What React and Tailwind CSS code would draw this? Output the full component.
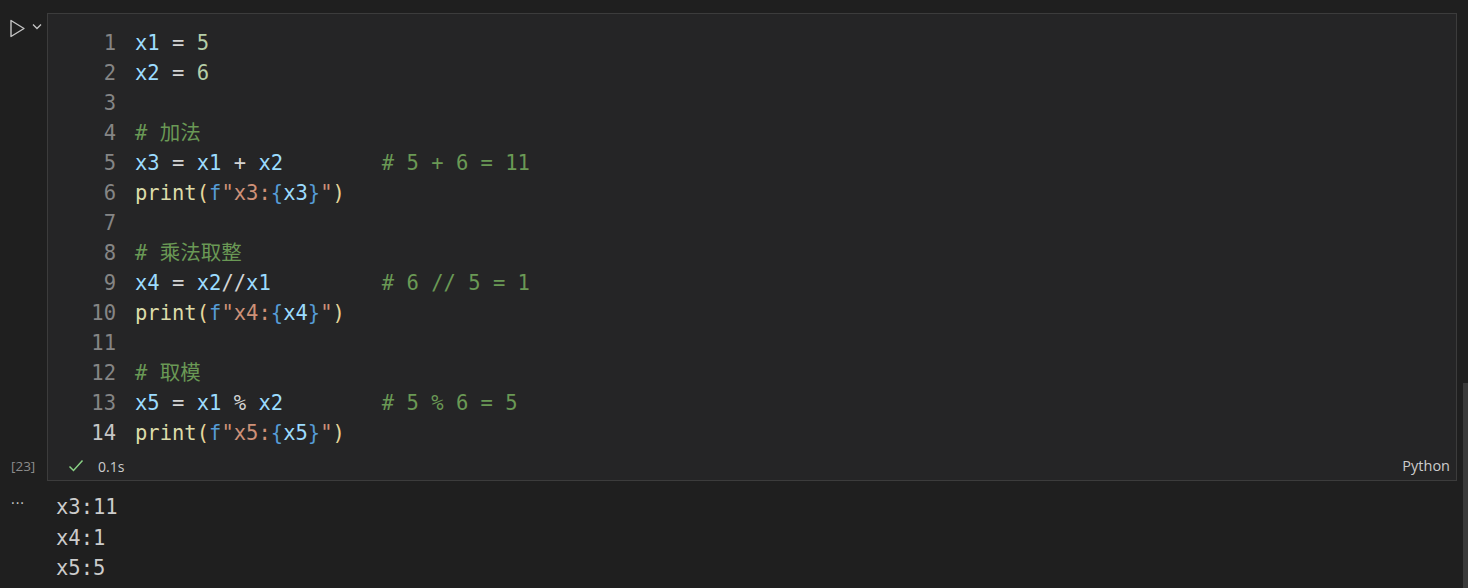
const C = {
  v: "text-[#9cdcfe]",
  n: "text-[#b5cea8]",
  o: "text-[#d4d4d4]",
  c: "text-[#6a9955]",
  f: "text-[#dcdcaa]",
  s: "text-[#ce9178]",
  k: "text-[#569cd6]",
  p: "text-[#e6d69a]",
};

const printLine = (name) => [
  ["print", "f"],
  ["(", "p"],
  ["f", "k"],
  ['"' + name + ":", "s"],
  ["{", "k"],
  [name, "v"],
  ["}", "k"],
  ['"', "s"],
  [")", "p"],
];

const lines = [
  [["x1", "v"], [" = ", "o"], ["5", "n"]],
  [["x2", "v"], [" = ", "o"], ["6", "n"]],
  [],
  [["# 加法", "c"]],
  [["x3", "v"], [" = ", "o"], ["x1", "v"], [" + ", "o"], ["x2", "v"], ["        # 5 + 6 = 11", "c"]],
  printLine("x3"),
  [],
  [["# 乘法取整", "c"]],
  [["x4", "v"], [" = ", "o"], ["x2", "v"], ["//", "o"], ["x1", "v"], ["         # 6 // 5 = 1", "c"]],
  printLine("x4"),
  [],
  [["# 取模", "c"]],
  [["x5", "v"], [" = ", "o"], ["x1", "v"], [" % ", "o"], ["x2", "v"], ["        # 5 % 6 = 5", "c"]],
  printLine("x5"),
];

const mono = "font-['DejaVu_Sans_Mono','Noto_Sans_CJK_SC',monospace]";
const ui = "font-['Open_Sans','Noto_Sans',sans-serif]";

export default function App() {
  return (
    <div className="relative w-[1468px] h-[588px] overflow-hidden bg-[#1f1f1f]">
      <div className="flex pt-[13px]">
        {/* gutter */}
        <div className="w-[47px] flex flex-col justify-between items-start">
          <div className="flex items-center pl-[9px] pt-[6px] gap-[6px]">
            <svg width="17" height="19" viewBox="0 0 17 19">
              <path d="M2 1.5 L15 9.5 L2 17.5 Z" fill="none" stroke="#c5c5c5" strokeWidth="1.4" strokeLinejoin="round" />
            </svg>
            <svg width="10" height="7" viewBox="0 0 10 7" className="-mt-[4px]">
              <path d="M1 1.5 L5 5.5 L9 1.5" fill="none" stroke="#c5c5c5" strokeWidth="1.3" />
            </svg>
          </div>
          <div className={`${ui} h-[28px] mb-[1px] flex items-center pl-[11px] text-[13.5px] text-[#8c8c8c]`}>
            [23]
          </div>
        </div>
        {/* cell */}
        <div className="w-[1410px] border border-[#3c3c3c] bg-[#252526]">
          <div className={`${mono} text-[20.5px] leading-[30px] pt-[14px]`}>
            {lines.map((toks, i) => (
              <div key={i} className="flex h-[30px]">
                <div className={`w-[68px] text-right ${i === 13 ? "text-[#c6c6c6]" : "text-[#858585]"}`}>
                  {i + 1}
                </div>
                <div className="pl-[19px] whitespace-pre">
                  {toks.map(([t, c], j) => (
                    <span key={j} className={C[c]}>
                      {t}
                    </span>
                  ))}
                </div>
              </div>
            ))}
          </div>
          <div className={`${ui} mt-[4px] h-[28px] flex items-center justify-between pl-[20px] pr-[6px]`}>
            <div className="flex items-center gap-[14px]">
              <svg width="16" height="14" viewBox="0 0 16 14">
                <path d="M1.5 7.5 L5.5 11.5 L14.5 1.5" fill="none" stroke="#89d185" strokeWidth="1.5" />
              </svg>
              <span className="text-[14px] text-[#cccccc]">0.1s</span>
            </div>
            <span className="text-[14.5px] text-[#cccccc]">Python</span>
          </div>
        </div>
      </div>
      {/* output */}
      <div className="flex pt-[11px]">
        <div className="w-[47px] pl-[11px] text-[#cccccc] text-[14px] leading-[14px] tracking-[1px] pt-[4px]">
          <span className={ui}>···</span>
        </div>
        <div className={`${mono} pl-[9px] text-[20.5px] leading-[30.5px] text-[#cccccc]`}>
          <div>x3:11</div>
          <div>x4:1</div>
          <div>x5:5</div>
        </div>
      </div>
      {/* scrollbar thumb */}
      <div className="absolute right-0 top-[383px] w-[5px] h-[205px] bg-[#3a3a3a]" />
    </div>
  );
}
